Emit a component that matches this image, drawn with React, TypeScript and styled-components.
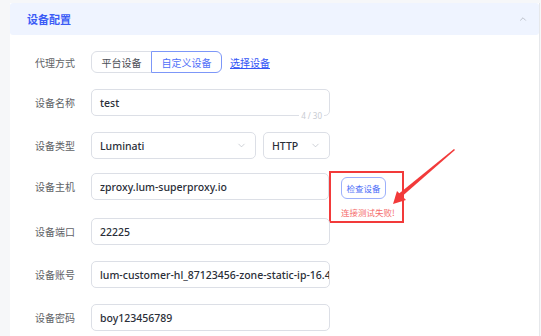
import styled, { createGlobalStyle } from "styled-components";
import { ChevronDown, ChevronUp } from "lucide-react";

const GlobalStyle = createGlobalStyle`
  html, body {
    margin: 0;
    padding: 0;
    background: #f6f7f9;
    font-family: "Noto Sans", "Noto Sans CJK SC", sans-serif;
  }
`;

const Page = styled.div`
  height: 336px;
  padding: 3px 0 0 10px;
  box-sizing: border-box;
  overflow: hidden;
  position: relative;
`;

const Panel = styled.section`
  width: 530px;
  height: 333px;
  background: #ffffff;
  border-right: 1px solid #e6e8eb;
  box-sizing: border-box;
`;

const Header = styled.div`
  height: 32px;
  background: #eff4ff;
  border-radius: 3px;
  display: flex;
  align-items: center;
  justify-content: space-between;
  padding: 0 11px 0 17px;
`;

const Title = styled.h2`
  margin: 0;
  font-size: 11px;
  font-weight: 700;
  color: #3c5cf6;
  font-family: "Noto Sans CJK SC", sans-serif;
`;

const Body = styled.div`
  padding-top: 16px;
  display: flex;
  flex-direction: column;
  gap: 16px;
`;

const Row = styled.div<{ $gap?: number; $top?: boolean }>`
  display: flex;
  align-items: ${(p) => (p.$top ? "flex-start" : "center")};
  margin-top: ${(p) => p.$gap ?? 0}px;
`;

const Label = styled.label<{ $top?: boolean }>`
  width: 81px;
  flex-shrink: 0;
  box-sizing: border-box;
  padding-right: 16px;
  text-align: right;
  font-size: 10px;
  line-height: ${(p) => (p.$top ? "27px" : "normal")};
  color: #606266;
  font-family: "Noto Sans CJK SC", sans-serif;
`;

const Segment = styled.div`
  display: flex;
  height: 22px;
`;

const SegButton = styled.button<{ $active?: boolean; $w: number }>`
  width: ${(p) => p.$w}px;
  height: 22px;
  background: #fff;
  border: 1px solid ${(p) => (p.$active ? "#7d97f8" : "#dcdfe6")};
  color: ${(p) => (p.$active ? "#4f6ff8" : "#4a4d55")};
  font-size: 10px;
  font-family: "Noto Sans CJK SC", sans-serif;
  padding: 0;
  margin-left: ${(p) => (p.$active ? "-1px" : "0")};
  border-radius: ${(p) => (p.$active ? "0 6px 6px 0" : "6px 0 0 6px")};
  position: relative;
`;

const Link = styled.a`
  margin-left: 8px;
  font-size: 10px;
  color: #3556f6;
  text-decoration: underline;
  font-family: "Noto Sans CJK SC", sans-serif;
`;

const Field = styled.div<{ $w?: number }>`
  width: ${(p) => p.$w ?? 239}px;
  height: 27px;
  box-sizing: border-box;
  border: 1px solid #dcdfe6;
  border-radius: 5px;
  display: flex;
  align-items: center;
  padding: 0 8px;
  position: relative;
  overflow: hidden;
  flex-shrink: 0;
`;

const Value = styled.span`
  font-size: 10.5px;
  font-weight: 500;
  color: #2a2e38;
  white-space: nowrap;
  flex: 1;
  font-family: "Noto Sans", sans-serif;
`;

const Counter = styled.span`
  position: absolute;
  right: 6px;
  bottom: -6px;
  background: #fff;
  padding: 0 2px;
  font-size: 8px;
  color: #c8cbd2;
  line-height: 12px;
`;

const NameWrap = styled.div`
  position: relative;
`;

const Arrow = styled(ChevronDown)`
  color: #b8bcc4;
  flex-shrink: 0;
`;

const Gap = styled.div`
  width: 7px;
`;

const CheckArea = styled.div`
  margin-top: -2px;
  margin-bottom: -23px;
  width: 75px;
  height: 52px;
  box-sizing: border-box;
  border: 2px solid #f23a3a;
  padding: 4px 0 0 10px;
  display: flex;
  flex-direction: column;
  align-items: flex-start;
`;

const CheckButton = styled.button`
  width: 45px;
  height: 22px;
  border: 1px solid #9cb0fb;
  border-radius: 6px;
  background: #fff;
  color: #4f6ff8;
  font-size: 8.5px;
  font-family: "Noto Sans CJK SC", sans-serif;
  padding: 0;
`;

const ErrorText = styled.span`
  margin-top: 7px;
  font-size: 8.5px;
  color: #f56c6c;
  font-family: "Noto Sans CJK SC", sans-serif;
`;

const Annotation = styled.svg`
  position: absolute;
  left: 0;
  top: 0;
  pointer-events: none;
`;

const SelectField = ({ value, w }: { value: string; w: number }) => (
  <Field $w={w}>
    <Value>{value}</Value>
    <Arrow size={11} strokeWidth={1.5} />
  </Field>
);

const TextRow = ({ label, value, gap }: { label: string; value: string; gap?: number }) => (
  <Row $gap={gap}>
    <Label>{label}</Label>
    <Field>
      <Value>{value}</Value>
    </Field>
  </Row>
);

export default function App() {
  return (
    <>
      <GlobalStyle />
      <Page>
        <Panel>
          <Header>
            <Title>设备配置</Title>
            <ChevronUp size={10} color="#b5b9c2" strokeWidth={2} />
          </Header>
          <Body>
            <Row>
              <Label>代理方式</Label>
              <Segment>
                <SegButton $w={61}>平台设备</SegButton>
                <SegButton $w={71} $active>
                  自定义设备
                </SegButton>
              </Segment>
              <Link>选择设备</Link>
            </Row>
            <Row>
              <Label>设备名称</Label>
              <NameWrap>
                <Field>
                  <Value>test</Value>
                </Field>
                <Counter>4 / 30</Counter>
              </NameWrap>
            </Row>
            <Row>
              <Label>设备类型</Label>
              <SelectField value="Luminati" w={165} />
              <Gap />
              <SelectField value="HTTP" w={67} />
            </Row>
            <Row $gap={-2} $top>
              <Label $top>设备主机</Label>
              <Field $w={238}>
                <Value>zproxy.lum-superproxy.io</Value>
              </Field>
              <CheckArea>
                <CheckButton>检查设备</CheckButton>
                <ErrorText>连接测试失败!</ErrorText>
              </CheckArea>
            </Row>
            <TextRow label="设备端口" value="22225" gap={2} />
            <TextRow label="设备账号" value="lum-customer-hl_87123456-zone-static-ip-16.4" />
            <TextRow label="设备密码" value="boy123456789" />
          </Body>
        </Panel>
        <Annotation width={541} height={336}>
          <polygon points="454,149 455,150 399,199 396,196" fill="#f23a3a" />
          <polygon points="393,204 397,191 406,200" fill="#f23a3a" />
        </Annotation>
      </Page>
    </>
  );
}
